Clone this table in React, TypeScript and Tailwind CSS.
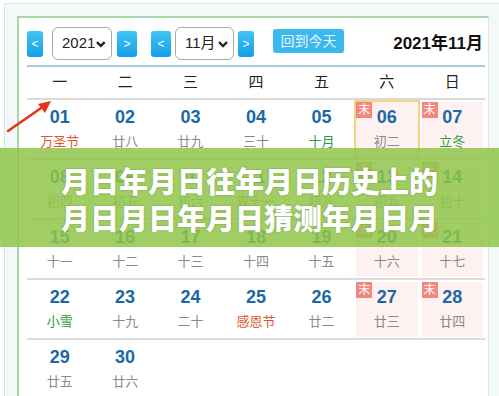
const days: { d: string; l: string; c?: string; wk?: boolean; today?: boolean }[][] = [
  [
    { d: '01', l: '万圣节', c: 'red' },
    { d: '02', l: '廿八' },
    { d: '03', l: '廿九' },
    { d: '04', l: '三十' },
    { d: '05', l: '十月', c: 'green' },
    { d: '06', l: '初二', wk: true, today: true },
    { d: '07', l: '立冬', c: 'green', wk: true },
  ],
  [
    { d: '08', l: '初四' },
    { d: '09', l: '初五' },
    { d: '10', l: '初六' },
    { d: '11', l: '双十一', c: 'red' },
    { d: '12', l: '初八' },
    { d: '13', l: '初九', wk: true },
    { d: '14', l: '初十', wk: true },
  ],
  [
    { d: '15', l: '十一' },
    { d: '16', l: '十二' },
    { d: '17', l: '十三' },
    { d: '18', l: '十四' },
    { d: '19', l: '十五' },
    { d: '20', l: '十六', wk: true },
    { d: '21', l: '十七', wk: true },
  ],
  [
    { d: '22', l: '小雪', c: 'green' },
    { d: '23', l: '十九' },
    { d: '24', l: '二十' },
    { d: '25', l: '感恩节', c: 'red' },
    { d: '26', l: '廿二' },
    { d: '27', l: '廿三', wk: true },
    { d: '28', l: '廿四', wk: true },
  ],
  [{ d: '29', l: '廿五' }, { d: '30', l: '廿六' }],
];

const weekdays = ['一', '二', '三', '四', '五', '六', '日'];

function ArrowBtn({ dir, w }: { dir: string; w: string }) {
  return (
    <div
      className={`${w} h-[26px] rounded-[3px] bg-gradient-to-b from-[#3fc6f5] to-[#129ee6] text-white text-[12px] flex items-center justify-center`}
    >
      {dir}
    </div>
  );
}

function Select({ label, w }: { label: string; w: string }) {
  return (
    <div
      className={`${w} h-[33px] rounded-[6px] border border-[#a9a9a9] bg-white flex items-center justify-between pl-[9px] pr-[4px] text-[15px] text-[#222]`}
    >
      <span>{label}</span>
      <svg width="12" height="10" viewBox="0 0 12 10">
        <path d="M2 3 L6 7 L10 3" fill="none" stroke="#222" strokeWidth="2.4" />
      </svg>
    </div>
  );
}

export default function App() {
  return (
    <div
      className="relative w-[499px] h-[396px] overflow-hidden bg-white"
      style={{ fontFamily: '"Liberation Sans", "Noto Sans CJK SC", sans-serif' }}
    >
      <div className="mt-[3px] ml-[4px] h-[393px] border-t border-l border-[#d3e3e9] bg-[#f2f9f8] pt-[12px] pl-[12px]">
        <div className="w-[472px] h-full border-t-2 border-l-2 border-r border-[#a8d3ab] border-r-[#d5ece0] bg-white pl-[8px] pt-[9px]">
          <div className="flex items-center h-[33px] w-[458px]">
            <ArrowBtn dir="<" w="w-[16px]" />
            <div className="ml-[9px]">
              <Select label="2021" w="w-[60px]" />
            </div>
            <div className="ml-[5px]">
              <ArrowBtn dir=">" w="w-[20px]" />
            </div>
            <div className="ml-[14px]">
              <ArrowBtn dir="<" w="w-[20px]" />
            </div>
            <div className="ml-[4px]">
              <Select label="11月" w="w-[59px]" />
            </div>
            <div className="ml-[4px]">
              <ArrowBtn dir=">" w="w-[16px]" />
            </div>
            <div className="ml-[19px] self-start mt-[2px] w-[71px] h-[24px] rounded-[3px] bg-[#3cb9ec] text-[#e6f6ff] text-[14px] flex items-center justify-center">
              回到今天
            </div>
            <div className="ml-auto mr-[2px] text-[17px] font-bold text-[#111]">2021年11月</div>
          </div>
          <div className="mt-[5px] w-[458px] h-[2px] bg-[#a9c8d8]" />
          <div className="grid grid-cols-7 w-[458px] h-[33px] border-b-2 border-[#dadada]">
            {weekdays.map((w) => (
              <div key={w} className="flex items-center justify-center text-[15px] text-[#222]">
                {w}
              </div>
            ))}
          </div>
          {days.map((row, ri) => (
            <div
              key={ri}
              className={`grid grid-cols-7 w-[458px] h-[60px] ${ri < 4 ? 'border-b-2 border-[#dcdcdc]' : ''}`}
            >
              {row.map((c) => (
                <div key={c.d} className={c.today ? 'pt-0 pb-0' : 'px-[2px] pt-[2px] pb-[1px]'}>
                  <div
                    className={`relative h-full flex flex-col items-center ${
                      c.wk ? 'bg-[#fdf1f1]' : ''
                    } ${c.today ? 'border-2 border-[#f2d47e] pt-[4px]' : 'pt-[4px]'}`}
                  >
                    {c.wk && (
                      <div className="absolute top-0 left-0 w-[16px] h-[16px] bg-[#f2877d] text-white text-[12px] leading-[16px] text-center">
                        末
                      </div>
                    )}
                    <div className="text-[18px] leading-[22px] font-bold text-[#1a69a6]">{c.d}</div>
                    <div
                      className={`mt-[5px] text-[13px] leading-[18px] ${
                        c.c === 'red' ? 'text-[#e2562a]' : c.c === 'green' ? 'text-[#2e9a40]' : 'text-[#8a8a8a]'
                      }`}
                    >
                      {c.l}
                    </div>
                  </div>
                </div>
              ))}
            </div>
          ))}
        </div>
      </div>

      <svg className="absolute left-0 top-[95px]" width="60" height="42" viewBox="0 0 60 42">
        <line x1="8" y1="36" x2="44" y2="11" stroke="#e5311d" strokeWidth="2.6" strokeLinecap="round" />
        <polygon points="51,6 38,9 45,18" fill="#e5311d" />
      </svg>

      <div className="absolute left-0 top-[148px] w-[499px] h-[99px] bg-[#8fc54a]/85 flex flex-col items-center justify-center">
        <div
          className="text-white text-[29px] leading-[37px] font-black tracking-[0px] pt-[3px]"
          style={{
            fontFamily: '"Noto Sans CJK SC", sans-serif',
            textShadow: '0 0 2px rgba(60,90,20,0.45)',
          }}
        >
          <div>月日年月日往年月日历史上的</div>
          <div>月日月日年月日猜测年月日月</div>
        </div>
      </div>
    </div>
  );
}
